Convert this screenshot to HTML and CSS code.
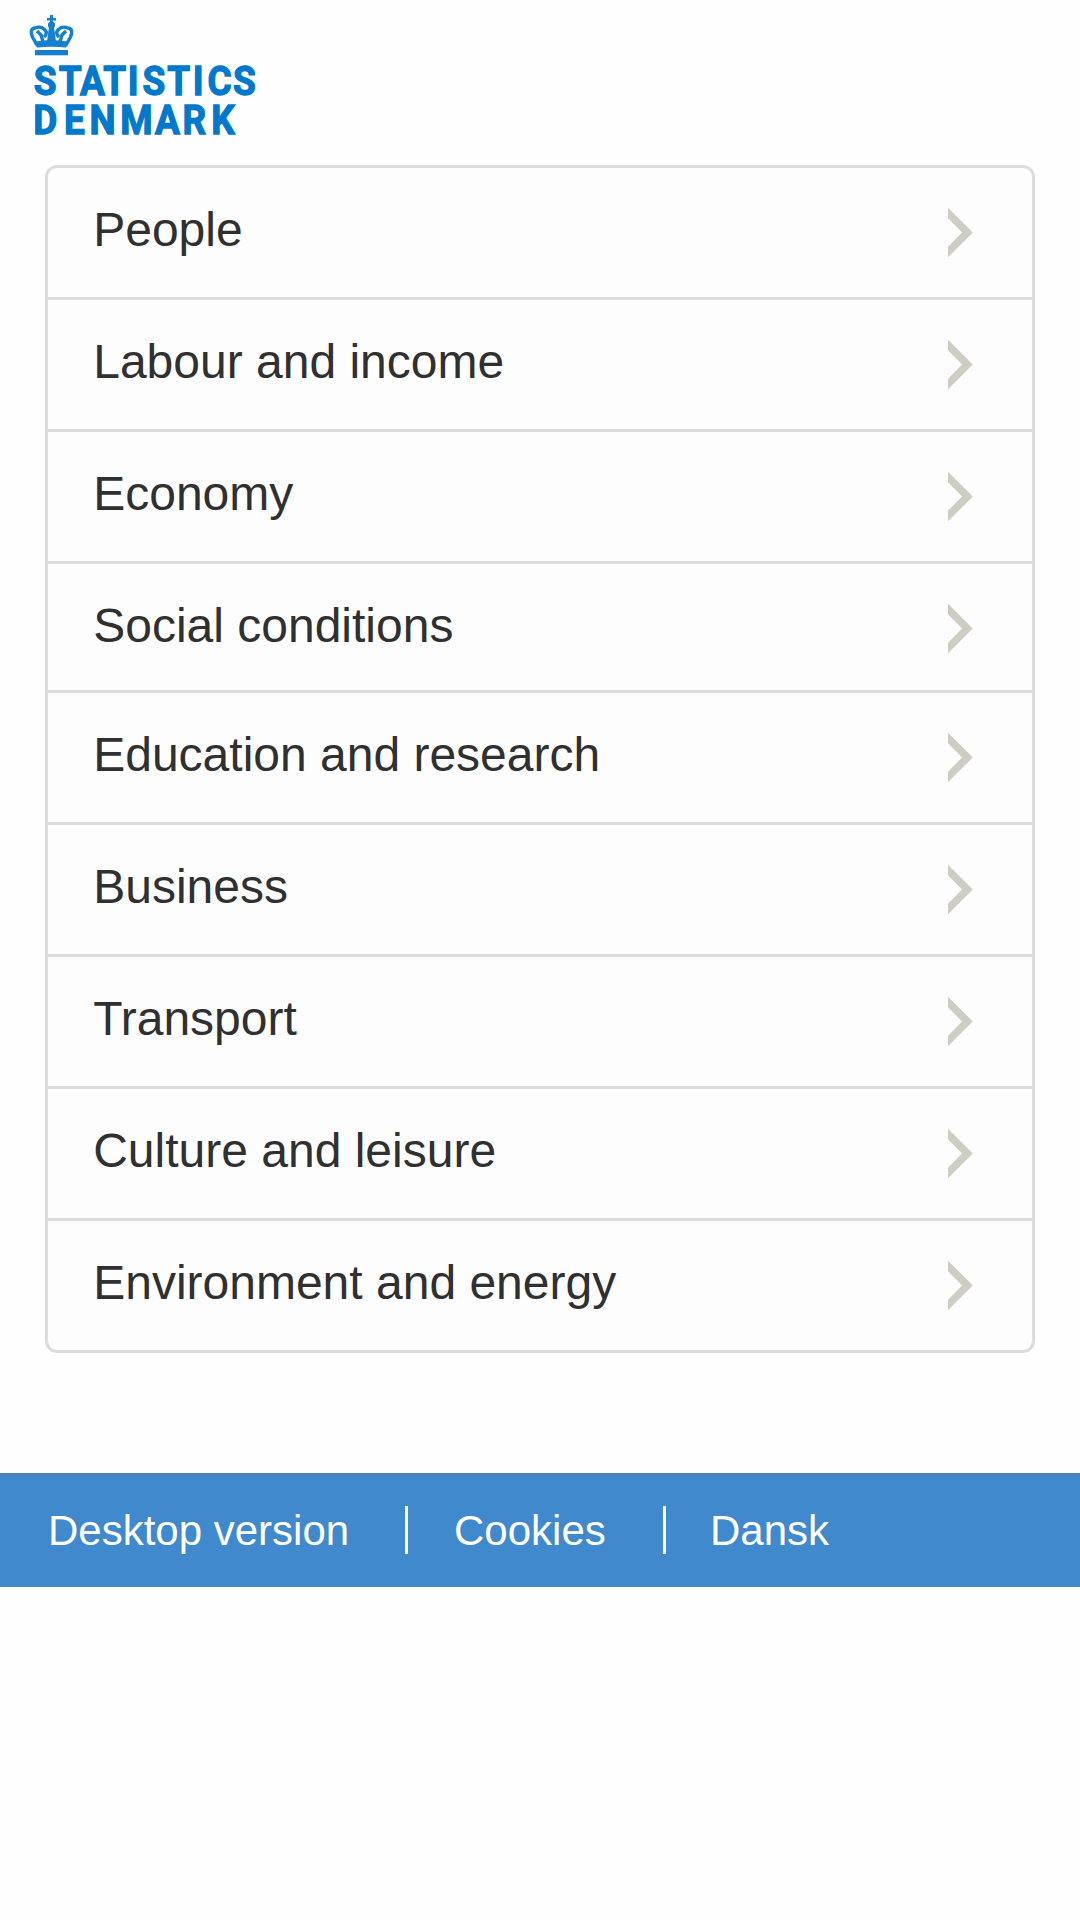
FILE: index.html
```html
<!DOCTYPE html>
<html lang="en">
<head>
<meta charset="utf-8">
<title>Statistics Denmark</title>
<link rel="stylesheet" href="styles.css">
</head>
<body>
<svg class="symbols" aria-hidden="true">
  <symbol id="chevron" viewBox="0 0 27 54"><path d="M-5 1 L19.500 25.500 L-5 50" fill="none" stroke="#cdcdc3" stroke-width="7.500"/></symbol>
</svg>
<header class="header">
  <svg class="logo" viewBox="0 0 270 150" role="img" aria-label="Statistics Denmark">
    <g class="crown">
      <path d="M50 15h3v3h3v2.500h-3v2h-3v-2h-3V18h3z"/>
      <circle cx="51.500" cy="25" r="3.600"/>
      <path d="M49 27h5l2.500 18h-10z"/>
      <path class="arch" d="M37.500 46 L32.500 37 Q29 29 35 28 Q41 25.500 45 30 Q48 33 44 37 M65.500 46 L70.500 37 Q74 29 68 28 Q62 25.500 58 30 Q55 33 59 37 M44 45 L41 35 L37 31 M59 45 L62 35 L66 31"/>
      <path d="M35.500 41.500q16-3 32 0l-1.500 6q-14.500-1.500-29 0z"/>
      <rect x="35" y="50" width="33" height="5.300"/>
    </g>
    <text class="wordmark" transform="scale(.89 1)" y="94.700" x="38 66 90 116 143.500 160.200 188 216.700 233.200 261.800">STATISTICS</text>
    <text class="wordmark" transform="scale(.89 1)" y="134.500" x="37.300 72 100.500 135 174.200 205 237.300">DENMARK</text>
  </svg>
</header>
<main>
  <ul class="subjects">
    <li><a href="#">People<svg class="arrow"><use href="#chevron"/></svg></a></li>
    <li><a href="#">Labour and income<svg class="arrow"><use href="#chevron"/></svg></a></li>
    <li><a href="#">Economy<svg class="arrow"><use href="#chevron"/></svg></a></li>
    <li class="compact"><a href="#">Social conditions<svg class="arrow"><use href="#chevron"/></svg></a></li>
    <li><a href="#">Education and research<svg class="arrow"><use href="#chevron"/></svg></a></li>
    <li><a href="#">Business<svg class="arrow"><use href="#chevron"/></svg></a></li>
    <li><a href="#">Transport<svg class="arrow"><use href="#chevron"/></svg></a></li>
    <li><a href="#">Culture and leisure<svg class="arrow"><use href="#chevron"/></svg></a></li>
    <li><a href="#">Environment and energy<svg class="arrow"><use href="#chevron"/></svg></a></li>
  </ul>
</main>
<footer class="footer">
  <a class="desktop" href="#">Desktop version</a>
  <a class="cookies" href="#">Cookies</a>
  <a class="language" href="#">Dansk</a>
</footer>
</body>
</html>
```
FILE: styles.css
```css
* { box-sizing: border-box; }
body {
  margin: 0;
  background: #fefefe;
  font-family: "Liberation Sans", Arial, sans-serif;
}
a { color: inherit; text-decoration: none; }
.symbols { display: none; }
.header { height: 165px; }
.logo { display: block; width: 270px; height: 150px; }
.crown { fill: #1580d0; }
.arch { fill: none; stroke: #1580d0; stroke-width: 3.4; }
.wordmark {
  font-family: Roboto, "Liberation Sans", sans-serif;
  font-weight: 700;
  font-size: 41.5px;
  fill: #0078cb;
  stroke: #0078cb;
  stroke-width: 1.3;
}
.subjects {
  list-style: none;
  margin: 0 45px;
  padding: 0;
  border: 3px solid #dcdcdc;
  border-radius: 12px;
  background: #fdfdfd;
}
.subjects li { height: 132px; border-bottom: 3px solid #dcdcdc; }
.subjects .compact { height: 129px; }
.subjects li:last-child { height: 129px; border-bottom: 0; }
.subjects a {
  display: flex;
  justify-content: space-between;
  padding: 34px 57px 0 45.200px;
  font-size: 48px;
  line-height: 56px;
  color: #303030;
}
.arrow { width: 27px; height: 54px; margin-top: 5px; }
.footer {
  display: flex;
  height: 114px;
  margin-top: 120px;
  padding: 30px 46px;
  border-top: 3px solid #4a83ba;
  background: #3f89cc;
  color: #fff;
  font-size: 42px;
  line-height: 50px;
}
.footer a { height: 48px; }
.desktop { width: 362px; padding-left: 2px; border-right: 3px solid #fff; }
.cookies { width: 258px; padding-left: 46px; border-right: 3px solid #fff; }
.language { padding-left: 44px; }
```
